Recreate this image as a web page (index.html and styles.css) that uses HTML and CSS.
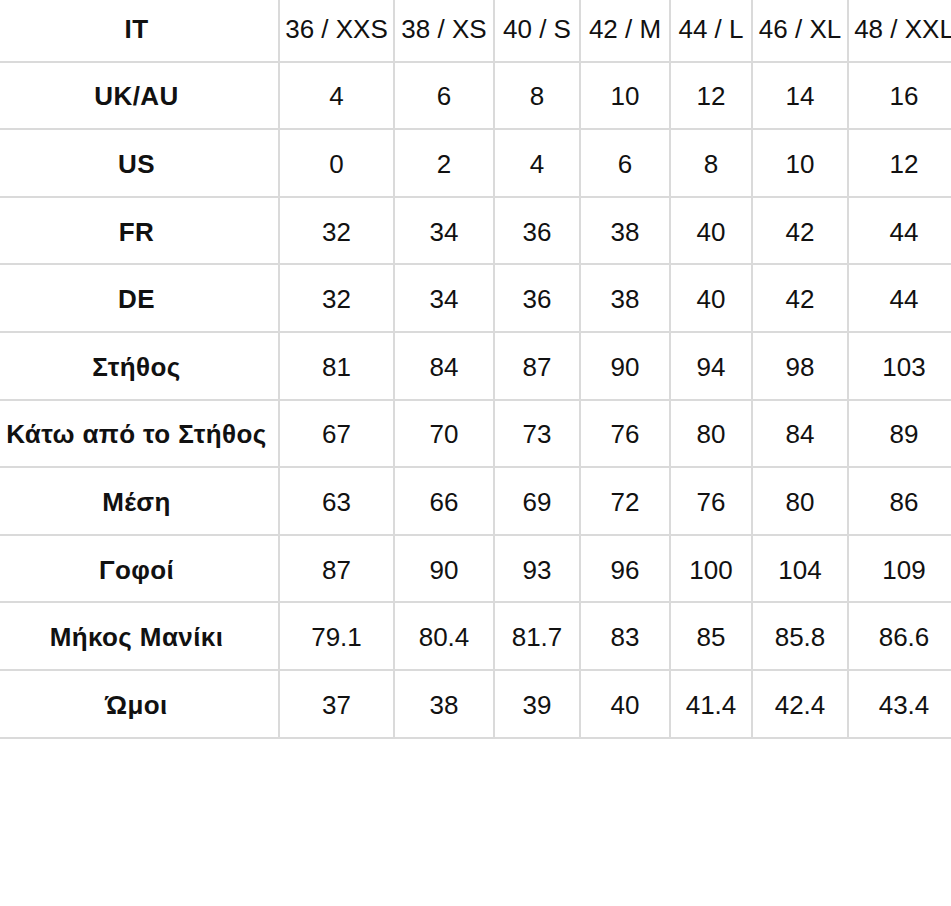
FILE: index.html
```html
<!DOCTYPE html>
<html lang="el">
<head>
<meta charset="utf-8">
<title>Πίνακας μεγεθών</title>
<link rel="stylesheet" href="styles.css">
</head>
<body>
<table class="size-table">
  <colgroup>
    <col class="c-label"><col class="c-1"><col class="c-2"><col class="c-3"><col class="c-4"><col class="c-5"><col class="c-6"><col class="c-7">
  </colgroup>
  <tbody>
    <tr><th>IT</th><td>36 / XXS</td><td>38 / XS</td><td>40 / S</td><td>42 / M</td><td>44 / L</td><td>46 / XL</td><td>48 / XXL</td></tr>
    <tr><th>UK/AU</th><td>4</td><td>6</td><td>8</td><td>10</td><td>12</td><td>14</td><td>16</td></tr>
    <tr><th>US</th><td>0</td><td>2</td><td>4</td><td>6</td><td>8</td><td>10</td><td>12</td></tr>
    <tr><th>FR</th><td>32</td><td>34</td><td>36</td><td>38</td><td>40</td><td>42</td><td>44</td></tr>
    <tr><th>DE</th><td>32</td><td>34</td><td>36</td><td>38</td><td>40</td><td>42</td><td>44</td></tr>
    <tr><th>Στήθος</th><td>81</td><td>84</td><td>87</td><td>90</td><td>94</td><td>98</td><td>103</td></tr>
    <tr><th>Κάτω από το Στήθος</th><td>67</td><td>70</td><td>73</td><td>76</td><td>80</td><td>84</td><td>89</td></tr>
    <tr><th>Μέση</th><td>63</td><td>66</td><td>69</td><td>72</td><td>76</td><td>80</td><td>86</td></tr>
    <tr><th>Γοφοί</th><td>87</td><td>90</td><td>93</td><td>96</td><td>100</td><td>104</td><td>109</td></tr>
    <tr><th>Μήκος Μανίκι</th><td>79.1</td><td>80.4</td><td>81.7</td><td>83</td><td>85</td><td>85.8</td><td>86.6</td></tr>
    <tr><th>Ώμοι</th><td>37</td><td>38</td><td>39</td><td>40</td><td>41.4</td><td>42.4</td><td>43.4</td></tr>
  </tbody>
</table>
</body>
</html>
```

FILE: styles.css
```css
html, body {
  margin: 0;
  padding: 0;
  background: #ffffff;
  overflow: hidden;
}

body {
  width: 951px;
  height: 906px;
}

.size-table {
  margin: -7px 0 0 -7px;
  border-collapse: collapse;
  table-layout: fixed;
  width: 966px;
  font-family: "Liberation Sans", Arial, sans-serif;
  font-size: 26px;
  color: #111111;
}

.c-label { width: 285px; }
.c-1 { width: 115px; }
.c-2 { width: 100px; }
.c-3 { width: 86px; }
.c-4 { width: 90px; }
.c-5 { width: 82px; }
.c-6 { width: 96px; }
.c-7 { width: 112px; }

.size-table th,
.size-table td {
  border: 2px solid #dadada;
  height: 67.6px;
  padding: 3px 0 0;
  text-align: center;
  vertical-align: middle;
  white-space: nowrap;
  overflow: hidden;
  box-sizing: border-box;
}

.size-table th {
  font-weight: bold;
  letter-spacing: 0.4px;
}

.size-table td {
  font-weight: normal;
}
```
